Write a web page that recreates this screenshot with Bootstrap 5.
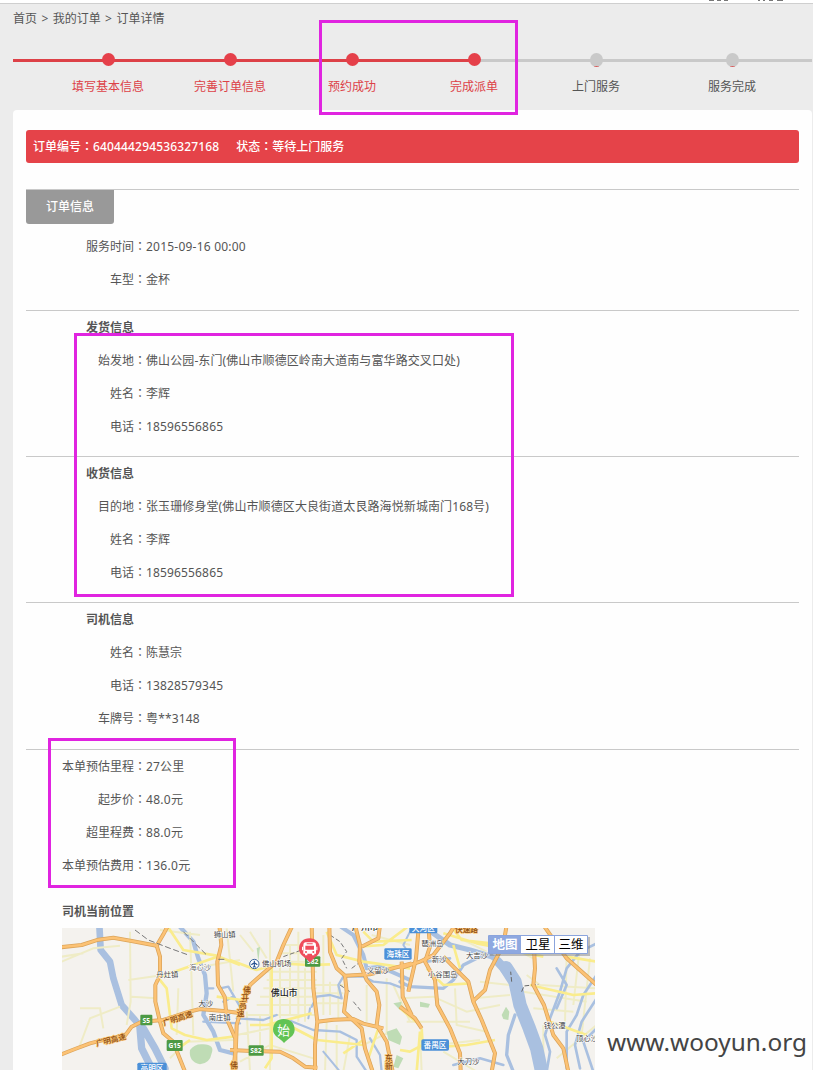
<!DOCTYPE html>
<html lang="zh-CN">
<head>
<meta charset="utf-8">
<meta name="viewport" content="width=device-width, initial-scale=1">
<title>订单详情</title>
<link href="https://cdn.jsdelivr.net/npm/bootstrap@5.3.0/dist/css/bootstrap.min.css" rel="stylesheet">
<script src="https://cdn.jsdelivr.net/npm/bootstrap@5.3.0/dist/js/bootstrap.bundle.min.js"></script>
<style>
  body{font:12px/33px "Noto Sans","Noto Sans CJK SC",sans-serif;color:#555;background:#ececec;height:1070px;overflow:hidden}
  .topbar{height:4px;background:#fff;border-bottom:1px solid #cfcfcf}
  .topbar svg{margin-left:706px}
  .crumb{height:28px;line-height:29px;padding-left:13px;white-space:pre;word-spacing:1.3px}
  .steps{height:78px;padding:21px 6px 0 47px;background:linear-gradient(90deg,#dd4147 461px,#c9c9c9 461px) 13px 27px/799px 3px no-repeat}
  .step{width:122px;color:#dd4147;line-height:14px}
  .step i{display:block;width:13px;height:13px;border-radius:50%;background:#e5404a;margin:0 auto 14px}
  .step.todo{color:#555}
  .step.todo i{background:linear-gradient(#d25a5a,#d25a5a) 50% 100%/5px 1px no-repeat,#c9c9c9;height:14px;margin-bottom:13px}
  .step:last-child{width:150px}
  .panel{margin:0 1px 0 13px;padding:20px 13px 0;height:960px;background:#fefefe;border-radius:4px 4px 0 0}
  .status{height:33px;background:#e54349;color:#fff;border-radius:3px;padding-left:7px;font-weight:500}
  .status .gap{margin-left:17px}
  .sec{border-top:1px solid #c9c9c9;padding-bottom:13px}
  .tab{width:88px;height:34px;line-height:33px;background:#999;color:#fff;border-radius:0 0 3px 3px;font-weight:500}
  .line{height:33px;white-space:nowrap}
  .key{width:120px;text-align:right;flex:none}
  .c{font-family:"Noto Sans CJK JP",sans-serif;-webkit-locale:"ja";line-height:1}
  .n{letter-spacing:.15px}
  .addr{letter-spacing:.1px}
  .head{font-weight:700;height:33px;padding-left:60px}
  .map{display:block;margin-left:36px}
  .mark-box{position:absolute;border:3px solid #e024e0}
  .wm{position:absolute;left:607px;top:1023px;font-size:24.4px;line-height:38px;color:#444;white-space:nowrap}
  .water{fill:none;stroke:#a9c0e0;stroke-linecap:round;stroke-linejoin:round}
  .minor{fill:none;stroke:#efecc6;stroke-width:6}
  .yel{fill:none;stroke:#faec8c;stroke-width:8;stroke-linejoin:round}
  .case{fill:none;stroke:#dba45a;stroke-width:12;stroke-linejoin:round}
  .core{fill:none;stroke:#fcc274;stroke-width:7.5;stroke-linejoin:round}
  .lb{font:22px "Noto Sans CJK SC",sans-serif;fill:#444;stroke:#fff;stroke-width:3;paint-order:stroke}
  .rd{font:500 23px "Noto Sans CJK SC",sans-serif;fill:#8a4b10;stroke:#fdc878;stroke-width:4;paint-order:stroke}
  .sg{font:700 20px "Noto Sans",sans-serif;fill:#fff;text-anchor:middle}
  .ds{font:500 23px "Noto Sans CJK SC",sans-serif;fill:#fff;text-anchor:middle}
</style>
</head>
<body class="position-relative">
<div class="topbar d-flex"><svg width="90" height="2"><path d="M3 .3h5m3 0h4m3 0h4M52 .3h2m3 0h2m4 0h4m4 0h6" stroke="#555" stroke-width="1"/></svg></div>
<div class="crumb">首页 &gt; 我的订单 &gt; 订单详情</div>
<div class="steps d-flex text-center">
  <div class="step"><i></i>填写基本信息</div>
  <div class="step"><i></i>完善订单信息</div>
  <div class="step"><i></i>预约成功</div>
  <div class="step"><i></i>完成派单</div>
  <div class="step todo"><i></i>上门服务</div>
  <div class="step todo"><i></i>服务完成</div>
</div>
<main class="panel">
  <div class="status d-flex"><span>订单编号<span class="c">：</span><span class="n">640444294536327168</span></span><span class="gap">状态<span class="c">：</span>等待上门服务</span></div>
  <section class="sec" style="margin-top:26px;padding-bottom:14px">
    <div class="tab text-center" style="margin-bottom:6px">订单信息</div>
    <div class="line d-flex"><span class="key">服务时间<span class="c">：</span></span><span style="letter-spacing:.22px">2015-09-16 00:00</span></div>
    <div class="line d-flex"><span class="key">车型<span class="c">：</span></span><span>金杯</span></div>
  </section>
  <section class="sec">
    <div class="head">发货信息</div>
    <div class="line d-flex"><span class="key">始发地<span class="c">：</span></span><span class="addr">佛山公园-东门(佛山市顺德区岭南大道南与富华路交叉口处)</span></div>
    <div class="line d-flex"><span class="key">姓名<span class="c">：</span></span><span>李辉</span></div>
    <div class="line d-flex"><span class="key">电话<span class="c">：</span></span><span class="n">18596556865</span></div>
  </section>
  <section class="sec">
    <div class="head">收货信息</div>
    <div class="line d-flex"><span class="key">目的地<span class="c">：</span></span><span class="addr">张玉珊修身堂(佛山市顺德区大良街道太艮路海悦新城南门168号)</span></div>
    <div class="line d-flex"><span class="key">姓名<span class="c">：</span></span><span>李辉</span></div>
    <div class="line d-flex"><span class="key">电话<span class="c">：</span></span><span class="n">18596556865</span></div>
  </section>
  <section class="sec" style="padding-bottom:14px">
    <div class="head">司机信息</div>
    <div class="line d-flex"><span class="key">姓名<span class="c">：</span></span><span>陈慧宗</span></div>
    <div class="line d-flex"><span class="key">电话<span class="c">：</span></span><span class="n">13828579345</span></div>
    <div class="line d-flex"><span class="key">车牌号<span class="c">：</span></span><span class="n">粤**3148</span></div>
  </section>
  <section class="sec">
    <div class="line d-flex"><span class="key">本单预估里程<span class="c">：</span></span><span class="n">27公里</span></div>
    <div class="line d-flex"><span class="key">起步价<span class="c">：</span></span><span style="letter-spacing:.3px">48.0元</span></div>
    <div class="line d-flex"><span class="key">超里程费<span class="c">：</span></span><span style="letter-spacing:.3px">88.0元</span></div>
    <div class="line d-flex"><span class="key">本单预估费用<span class="c">：</span></span><span style="letter-spacing:.3px">136.0元</span></div>
  </section>
  <div class="head" style="padding-left:36px">司机当前位置</div>

  <svg class="map" width="533" height="142" viewBox="62 928 533 142">
    <defs>
      <g id="roadsA">
        <path d="M0 67L65 60L115 44L160 38L215 48L290 62L310 28L325 0"/>
        <path d="M290 62L300 95L300 150L286 180L286 230L300 290L310 325L340 350L355 390L375 440"/>
        <path d="M0 390L45 372L90 355L130 345L195 332L215 305L245 290L310 285L380 262L420 252L490 258L545 265"/>
        <path d="M478 0L484 60L472 110L474 180L494 215L500 280L526 340L526 440"/>
      </g>
      <g id="roadsB">
        <path d="M188 0L160 60L140 110L105 140L60 180L40 230L20 300L18 360L10 440"/>
        <path d="M245 0L250 190L262 290L255 360L255 440"/>
        <path d="M298 0L300 80L320 130L345 152L420 148L545 115"/>
        <path d="M345 152L350 200L342 260L395 310L405 370L428 440"/>
        <path d="M262 290L310 284L370 282L400 296L460 310"/>
        <path d="M375 0L390 60L388 110L410 165L440 200L448 240L440 300L470 350L488 440"/>
        <path d="M0 375L65 378L150 380L190 400L225 425L262 428"/>
        <path d="M395 65L445 40L450 0"/>
        <path d="M515 110L518 215L545 270"/>
      </g>
      <g id="roadsC">
        <path d="M85 0L90 65L75 110L105 165L112 240L150 310L180 385L182 440"/>
        <path d="M0 130L60 110L100 90L150 25L165 0"/>
        <path d="M55 20L48 100L25 200"/>
        <path d="M130 95L180 145L205 170L220 230L245 285L285 385L275 440"/>
        <path d="M320 0L310 60L270 135L255 195L218 230"/>
        <path d="M400 30L405 130L400 180L432 240L460 330L490 370L505 440"/>
        <path d="M430 0L500 100L590 180"/>
        <path d="M0 245L45 280L65 310"/>
      </g>
    </defs>
    <rect x="62" y="928" width="533" height="142" fill="#f4f2ee"/>

    <g transform="translate(60 925) scale(.33333)">
      <g class="water">
        <path stroke-width="20" d="M118 0L122 75L150 110L160 160L185 240L225 285L245 310"/>
        <path stroke-width="22" d="M240 310L245 370L275 430M250 310L285 370L315 430"/>
        <path stroke-width="13" d="M355 0L400 50L415 100L435 150L440 205L430 270L460 320L480 375L520 385"/>
        <path stroke-width="7" d="M440 190L460 190M480 190L505 185L540 245M430 290L540 295M490 230L520 215"/>
      </g>
      <g class="minor">
        <path d="M5 110L100 70L180 62M210 20L212 230L200 300M5 95L70 85M205 165L310 150M215 215L290 220M60 360L90 280L180 245M60 250L120 250L130 310M390 20L400 330M355 190L350 330M300 15L420 30M330 400L380 350L520 345M400 130L540 105M500 10L520 200"/>
      </g>
      <g class="yel"><path d="M320 0L370 75L470 92L540 120M300 155L472 95M296 160L320 190L335 310L375 330L440 345L520 335M355 370L390 345M470 215L545 225"/></g>
      <path d="M390 375Q405 355 430 358Q465 360 455 385Q450 415 420 418Q385 410 390 375Z" fill="#bfdcb5"/>
    </g>
    <g transform="translate(230 925) scale(.33333)">
      <g class="minor">
        <path d="M30 30L70 80M60 20L110 100M120 15V440M150 110V280M180 60V270M205 20V290M225 130V290M165 60H245M150 85H245M130 110H245M110 140H260M110 165H260M100 190H260M90 215H260M80 240H260M50 270H260M280 30V270M300 170V270M325 180V280M255 180H340M255 205H340M260 235H345M20 330L120 310M50 260L60 440M30 410L120 360L250 400M90 270V370M150 290L230 330M290 290L285 440M320 300V440M360 330L340 440M410 180V290M470 160V330M490 180L540 290M400 360L480 320M425 30L540 60"/>
      </g>
      <g class="water">
        <path stroke-width="12" d="M325 0L370 30L400 90L410 130L450 125L540 165"/>
        <path stroke-width="7" d="M245 245L260 215L300 210L335 220L325 180L340 155L400 155L430 170L480 175L520 190"/>
        <path stroke-width="7" d="M20 280L100 285L140 270M175 285L250 315L330 320L380 345L380 395L410 440M420 340L450 390L455 440"/>
        <path stroke-width="6" d="M540 20L520 60L540 90M280 380L330 440M240 250L235 280"/>
      </g>
      <path d="M470 320L500 310L516 335L510 360L475 345ZM490 235L515 230L510 255ZM500 390L520 400L505 430L490 425ZM80 70L90 65L85 110Z" fill="#bfdcb5"/>
      <g class="yel"><path d="M0 105L80 135L150 115L235 120L300 118M125 120V400L105 430M60 300L175 300L260 345M290 20L320 90L400 110L540 130M385 65L460 60L540 0M262 345L400 360M340 385L400 345M400 20L430 50L545 45M445 310L415 400L430 440M110 300L245 265"/></g>
      <path d="M160 95L215 75M300 30L330 50L350 80L335 100L350 130M365 130L385 115M330 180L360 200M370 230L395 260" fill="none" stroke="#777" stroke-width="3" stroke-dasharray="14 7"/>
    </g>
    <g transform="translate(400 925) scale(.33333)">
      <g class="minor">
        <path d="M0 220L100 215L200 260L300 240M20 290H210M60 320L65 440M110 360L240 345M130 380L230 440M165 190L170 300L260 320M220 220L330 210M240 170L330 180M370 200L560 230M380 150L420 180L590 190M400 250L520 260M500 90L495 290M540 60L520 240M570 100L545 330M430 300L430 440M470 400L590 300M300 50L400 100M180 40L260 80"/>
      </g>
      <g class="water">
        <path stroke-width="16" d="M100 25L150 60L210 75L275 95L310 120"/>
        <path stroke-width="40" d="M318 128L345 170L360 240L388 310L410 370L425 440"/>
        <path stroke-width="27" d="M292 108L335 155"/>
        <path stroke-width="10" d="M0 170L30 185L130 190L160 165L190 120L250 90M345 270L325 330L320 390L340 440"/>
        <path stroke-width="8" d="M590 55L540 80L500 130L480 200L450 280L435 330L450 380L440 440M470 130L500 180L470 250M590 150L550 210L530 270L500 320L500 430M590 220L545 290L525 360L540 430M590 310L550 350L580 440M160 420L240 400L310 420M80 110L150 100"/>
      </g>
      <path d="M305 270L318 245L328 260L325 285L310 282ZM60 230L90 237L85 248L60 245Z" fill="#bfdcb5"/>
      <g class="yel"><path d="M150 0L185 45L320 60M130 25L230 55L430 95M65 310L68 360L30 380L0 375M68 370L200 360L285 345M0 250L60 300M80 130L130 180L210 175M390 180L520 210L590 205M450 290L560 330M500 95L590 110M160 60L180 130M60 320L50 440"/></g>
      <path d="M365 200L372 183L415 178M335 170L332 140" fill="none" stroke="#666" stroke-width="3" stroke-dasharray="14 6"/>
    </g>

    <g class="case">
      <use href="#roadsA" transform="translate(60 925) scale(.33333)"/>
      <use href="#roadsB" transform="translate(230 925) scale(.33333)"/>
      <use href="#roadsC" transform="translate(400 925) scale(.33333)"/>
    </g>
    <g class="core">
      <use href="#roadsA" transform="translate(60 925) scale(.33333)"/>
      <use href="#roadsB" transform="translate(230 925) scale(.33333)"/>
      <use href="#roadsC" transform="translate(400 925) scale(.33333)"/>
    </g>

    <g transform="translate(60 925) scale(.33333)">
      <path d="M225 15L265 45L330 70L385 90M370 20L440 90M475 103H495" fill="none" stroke="#777" stroke-width="3" stroke-dasharray="18 8"/>
      <text class="lb" x="461" y="35">狮山镇</text><text class="lb" x="387" y="136" fill-opacity=".8">海心沙</text>
      <text class="lb" x="289" y="155">丹灶镇</text><text class="lb" x="415" y="242">大沙</text><text class="lb" x="446" y="284">南庄镇</text>
      <text class="rd" transform="translate(110 364) rotate(-14)">广明高速</text>
      <text class="rd" transform="translate(312 302) rotate(-18)">广明高速</text>
      <rect x="241" y="269" width="36" height="32" rx="3" fill="#4d9a44"/><text class="sg" x="259" y="293">S5</text>
      <rect x="320" y="345" width="48" height="33" rx="3" fill="#4d9a44"/><text class="sg" x="344" y="369">G15</text>
      <rect x="232" y="413" width="88" height="34" rx="5" fill="#4b90d8"/><text class="ds" x="276" y="438">高明区</text>
    </g>
    <g transform="translate(230 925) scale(.33333)">
      <text class="lb" x="365" y="14" style="font-size:27px;font-weight:500;fill:#222">广州市</text>
      <circle cx="73" cy="117" r="14" fill="#fff" stroke="#39639c" stroke-width="3"/><path d="M73 107V127M64 119L73 113L82 119M69 127L73 124L77 127" fill="none" stroke="#27518f" stroke-width="3.4"/>
      <text class="lb" x="96" y="124">佛山机场</text>
      <text class="lb" x="122" y="212" style="font-size:27px;font-weight:500;fill:#222">佛山市</text>
      <text class="lb" x="411" y="144">义留沙</text>
      <text class="rd" x="40" y="204">佛</text><text class="rd" x="34" y="227">开</text><text class="rd" x="27" y="250">高</text><text class="rd" x="20" y="273">速</text>
      <text class="rd" x="1" y="428">佛</text><text class="rd" x="465" y="408">东</text><text class="rd" x="465" y="431">新</text>
      <rect x="56" y="361" width="45" height="31" rx="3" fill="#4d9a44"/><text class="sg" x="78" y="384">S82</text>
      <rect x="463" y="70" width="82" height="34" rx="4" fill="#4b90d8"/><text class="ds" x="504" y="96">海珠区</text>
      <rect x="225" y="94" width="46" height="31" rx="3" fill="#4d9a44"/><text class="sg" x="248" y="117">S82</text>
      <path d="M238 40C258 40 270 53 270 72C270 92 252 96 240 113C227 96 206 92 207 70C208 52 220 40 238 40Z" fill="#ef4d5c"/>
      <path d="M226 52H252Q258 52 258 60V86H253V91H246V86H232V91H225V86H220V60Q220 52 226 52Z" fill="#fff"/><path d="M226 62H252V74H226ZM230 55H248V58H230Z" fill="#ef4d5c"/><path d="M216 65h3v11h-3zM259 65h3v11h-3z" fill="#fff"/><circle cx="228" cy="81" r="3" fill="#ef4d5c"/><circle cx="250" cy="81" r="3" fill="#ef4d5c"/>
      <path d="M161 282C182 282 194 295 194 315C193 335 176 338 162 354C148 338 129 334 129 313C130 294 142 282 161 282Z" fill="#62c354"/>
      <text x="161" y="329" style="font:38px 'Noto Sans CJK SC',sans-serif" fill="#fff" text-anchor="middle">始</text>
    </g>
    <g transform="translate(400 925) scale(.33333)">
      <rect x="28" y="-5" width="84" height="30" rx="4" fill="#4b90d8"/><text class="ds" x="70" y="19">天河区</text>
      <text class="rd" x="165" y="21">快速路</text>
      <text class="lb" x="64" y="63">琶洲岛</text><text class="lb" x="95" y="110">新沙</text><text class="lb" x="198" y="98">大吉沙</text><text class="lb" x="84" y="155">小谷围岛</text>
      <text class="lb" x="431" y="308">钱公潭</text><text class="lb" x="528" y="348">顶心沙</text><text class="lb" x="172" y="418">大刀沙</text>
      <rect x="64" y="343" width="83" height="34" rx="5" fill="#4b90d8"/><text class="ds" x="105" y="369">番禺区</text>
    </g>
    <g font-family="Noto Sans CJK SC,sans-serif" font-size="12.5" text-anchor="middle" fill="#000">
      <path d="M490 937H590V956H490Z" fill="#777" opacity=".45"/>
      <path d="M488.5 935.5H587.5V953.5H488.5Z" fill="#fff" stroke="#8ba4dc"/><path d="M489 936H521V953H489Z" fill="#8ea8e0"/><path d="M554.5 936V953" stroke="#8ba4dc"/>
      <text x="505" y="949" fill="#fff" font-weight="700">地图</text><text x="538" y="949">卫星</text><text x="571" y="949">三维</text>
    </g>
  </svg>
</main>
<div class="mark-box" style="left:319px;top:20px;width:199px;height:95px"></div>
<div class="mark-box" style="left:74px;top:333px;width:440px;height:264px"></div>
<div class="mark-box" style="left:48px;top:738px;width:188px;height:150px"></div>
<div class="wm">www.wooyun.org</div>
</body>
</html>
